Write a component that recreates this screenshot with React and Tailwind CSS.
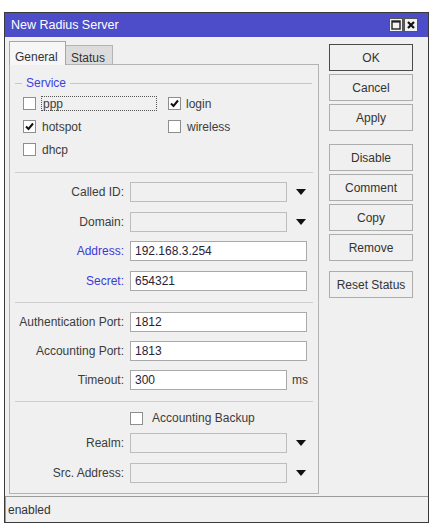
import React from 'react';

// small bits of the dialog
const Check = ({ checked }) => (
  <span className="w-[13px] h-[13px] border border-[#8e8e8e] bg-white flex items-center justify-center shrink-0">
    {checked && (
      <svg width="9" height="9" viewBox="0 0 9 9">
        <path d="M1 4.5 L3.5 7 L8 1.5" fill="none" stroke="#111" strokeWidth="2" />
      </svg>
    )}
  </span>
);

const Arrow = () => (
  <svg className="ml-[9px]" width="10" height="6" viewBox="0 0 10 6">
    <polygon points="0,0 10,0 5,6" fill="#111" />
  </svg>
);

const Separator = ({ className }) => (
  <div className={`mx-[5px] border-t border-[#cfcfcf] ${className}`} />
);

const Row = ({ label, blue, className, children }) => (
  <div className={`flex items-center h-[20px] ${className}`}>
    <div className={`w-[114px] text-right ${blue ? 'text-[#3a3ad8]' : 'text-[#3c3c3c]'}`}>{label}</div>
    <div className="ml-[6px] flex items-center">{children}</div>
  </div>
);

const EmptyField = () => (
  <div className="w-[157px] h-[20px] border border-[#bdbdbd] bg-[#f0f0f0]" />
);

const ValueField = ({ value, short }) => (
  <div className={`${short ? 'w-[157px]' : 'w-[177px]'} h-[20px] border border-[#a9a9a9] bg-white pl-[4px] flex items-center text-[#2a2233]`}>
    {value}
  </div>
);

const buttons = [
  { label: 'OK', cls: 'border-[#4a4a4a]' },
  { label: 'Cancel', cls: 'mt-[3px] border-[#adadad]' },
  { label: 'Apply', cls: 'mt-[3px] border-[#adadad]' },
  { label: 'Disable', cls: 'mt-[13px] border-[#adadad]' },
  { label: 'Comment', cls: 'mt-[3px] border-[#adadad]' },
  { label: 'Copy', cls: 'mt-[3px] border-[#adadad]' },
  { label: 'Remove', cls: 'mt-[3px] border-[#adadad]' },
  { label: 'Reset Status', cls: 'mt-[10px] border-[#adadad]' },
];

const App = () => {
  return (
    <div className="w-[435px] h-[531px] bg-white pt-[12px] pl-[4px] font-['Liberation_Sans',Arial,sans-serif] text-[12px] text-[#3c3c3c]">
      <div className="w-[425px] h-[511px] border border-[#3a3a3a] bg-[#f0f0f0] flex flex-col">
        {/* Title bar */}
        <div className="h-[24px] bg-[#4d4dc9] flex items-center pl-[6px] pr-[10px]">
          <span className="text-white text-[12.5px]">New Radius Server</span>
          <div className="ml-auto flex gap-[1px]">
            <div className="w-[14px] h-[14px] bg-[#f2f2f2] border border-[#555] flex items-center justify-center">
              <svg width="10" height="10" viewBox="0 0 10 10">
                <rect x="1" y="1" width="8" height="8" fill="none" stroke="#222" strokeWidth="1.4" />
                <line x1="1" y1="1.8" x2="9" y2="1.8" stroke="#222" strokeWidth="1.6" />
              </svg>
            </div>
            <div className="w-[14px] h-[14px] bg-[#f2f2f2] border border-[#555] flex items-center justify-center">
              <svg width="10" height="10" viewBox="0 0 10 10">
                <path d="M2 2 L8 8 M8 2 L2 8" stroke="#111" strokeWidth="2.2" />
              </svg>
            </div>
          </div>
        </div>

        {/* Body */}
        <div className="flex">
          <div className="pl-[4px] pt-[4px]">
            {/* Tabs */}
            <div className="flex items-end h-[23px]">
              <div className="relative z-10 -mb-[1px] h-[24px] w-[57px] border border-b-0 border-[#a6a6a6] bg-[#f6f6f6] pl-[5px] pt-[6px] text-[#333]">
                General
              </div>
              <div className="h-[19px] w-[47px] border border-b-0 border-l-0 border-[#b4b4b4] bg-[#dcdcdc] pl-[5px] pt-[3px] text-[#333]">
                Status
              </div>
            </div>

            {/* Tab panel */}
            <div className="w-[310px] h-[430px] border border-[#b4b4b4] bg-[#f0f0f0]">
              <div className="flex items-center h-[14px] mt-[11px] ml-[5px] mr-[6px]">
                <div className="w-[7px] border-t border-[#c6c6c6]" />
                <span className="px-[4px] text-[#4040e0]">Service</span>
                <div className="flex-1 border-t border-[#c6c6c6]" />
              </div>

              <div className="mt-[2px] pl-[13px] grid grid-cols-[145px_auto]">
                <div className="flex items-center h-[23px]">
                  <Check />
                  <span className="ml-[5px] w-[116px] h-[15px] border border-dotted border-[#555] pl-[1px] flex items-center">ppp</span>
                </div>
                <div className="flex items-center h-[23px]">
                  <Check checked />
                  <span className="ml-[5px]">login</span>
                </div>
                <div className="flex items-center h-[23px]">
                  <Check checked />
                  <span className="ml-[6px]">hotspot</span>
                </div>
                <div className="flex items-center h-[23px]">
                  <Check />
                  <span className="ml-[6px]">wireless</span>
                </div>
                <div className="flex items-center h-[23px]">
                  <Check />
                  <span className="ml-[6px]">dhcp</span>
                </div>
              </div>

              <Separator className="mt-[11px]" />

              <Row label="Called ID:" className="mt-[9px]">
                <EmptyField />
                <Arrow />
              </Row>
              <Row label="Domain:" className="mt-[10px]">
                <EmptyField />
                <Arrow />
              </Row>
              <Row label="Address:" blue className="mt-[9px]">
                <ValueField value="192.168.3.254" />
              </Row>
              <Row label="Secret:" blue className="mt-[10px]">
                <ValueField value="654321" />
              </Row>

              <Separator className="mt-[11px]" />

              <Row label="Authentication Port:" className="mt-[9px]">
                <ValueField value="1812" />
              </Row>
              <Row label="Accounting Port:" className="mt-[9px]">
                <ValueField value="1813" />
              </Row>
              <Row label="Timeout:" className="mt-[9px]">
                <ValueField value="300" short />
                <span className="ml-[5px]">ms</span>
              </Row>

              <Separator className="mt-[11px]" />

              <div className="mt-[9px] h-[14px] pl-[120px] flex items-center">
                <Check />
                <span className="ml-[9px]">Accounting Backup</span>
              </div>

              <Row label="Realm:" className="mt-[8px]">
                <EmptyField />
                <Arrow />
              </Row>
              <Row label="Src. Address:" className="mt-[10px]">
                <EmptyField />
                <Arrow />
              </Row>
            </div>
          </div>

          {/* Buttons */}
          <div className="ml-[10px] pt-[7px] flex flex-col w-[84px]">
            {buttons.map((b) => (
              <div
                key={b.label}
                className={`h-[27px] border bg-[#f0f0f0] flex items-center justify-center text-[#333] ${b.cls}`}
              >
                {b.label}
              </div>
            ))}
          </div>
        </div>

        {/* Status bar */}
        <div className="mt-[2px] flex-1 border-t border-l border-[#9a9a9a] pl-[2px] flex items-center text-[#333]">
          enabled
        </div>
      </div>
    </div>
  );
};

export default App;
